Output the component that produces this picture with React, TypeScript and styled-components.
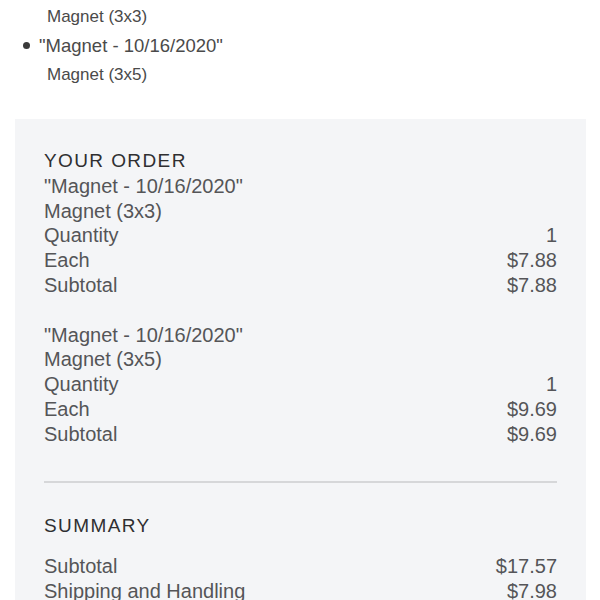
import React from 'react';
import styled, { createGlobalStyle } from 'styled-components';

const GlobalStyle = createGlobalStyle`
  body {
    margin: 0;
    background: #ffffff;
    font-family: "Liberation Sans", Arial, Helvetica, sans-serif;
  }
`;

const Page = styled.div`
  width: 600px;
  padding-top: 2px;
`;

const ItemList = styled.ul`
  list-style: none;
  margin: 0;
  padding: 0 0 0 22px;
  font-size: 18.5px;
  line-height: 29px;
  color: #4a4a4a;
`;

const ListItem = styled.li<{ $bullet?: boolean }>`
  position: relative;
  padding-left: 17px;

  &::before {
    content: '';
    display: ${(p) => (p.$bullet ? 'block' : 'none')};
    position: absolute;
    left: 1px;
    top: 11px;
    width: 7px;
    height: 7px;
    border-radius: 50%;
    background: #3a3a3a;
  }
`;

const ItemSub = styled.div`
  padding-left: 8px;
  font-size: 17px;
`;

const Panel = styled.section`
  margin: 30px 14px 0 15px;
  padding: 30px 29px 40px;
  background: #f4f5f7;
  color: #555558;
  font-size: 20px;
  line-height: 24.75px;
`;

const Heading = styled.h2`
  margin: 0;
  font-size: 19px;
  font-weight: 400;
  letter-spacing: 1.4px;
  line-height: 24.75px;
  color: #2f2f31;
`;

const OrderBlock = styled.div`
  & + & {
    margin-top: 25px;
  }
`;

const Row = styled.div`
  display: flex;
  justify-content: space-between;
`;

const Divider = styled.hr`
  margin: 35px 0 31px;
  border: none;
  height: 2px;
  background: #d6d7d9;
`;

const SummaryRows = styled.div`
  margin-top: 15px;
`;

type Order = { title: string; size: string; qty: number; each: string; subtotal: string };

const orders: Order[] = [
  { title: '"Magnet - 10/16/2020"', size: 'Magnet (3x3)', qty: 1, each: '$7.88', subtotal: '$7.88' },
  { title: '"Magnet - 10/16/2020"', size: 'Magnet (3x5)', qty: 1, each: '$9.69', subtotal: '$9.69' },
];

const App = () => {
  return (
    <Page>
      <GlobalStyle />
      <ItemList>
        <ListItem>
          <ItemSub>Magnet (3x3)</ItemSub>
        </ListItem>
        <ListItem $bullet>
          "Magnet - 10/16/2020"
          <ItemSub>Magnet (3x5)</ItemSub>
        </ListItem>
      </ItemList>

      <Panel>
        <Heading>YOUR ORDER</Heading>
        {orders.map((o, i) => (
          <OrderBlock key={i}>
            <div>{o.title}</div>
            <div>{o.size}</div>
            <Row>
              <span>Quantity</span>
              <span>{o.qty}</span>
            </Row>
            <Row>
              <span>Each</span>
              <span>{o.each}</span>
            </Row>
            <Row>
              <span>Subtotal</span>
              <span>{o.subtotal}</span>
            </Row>
          </OrderBlock>
        ))}

        <Divider />

        <Heading>SUMMARY</Heading>
        <SummaryRows>
          <Row>
            <span>Subtotal</span>
            <span>$17.57</span>
          </Row>
          <Row>
            <span>Shipping and Handling</span>
            <span>$7.98</span>
          </Row>
        </SummaryRows>
      </Panel>
    </Page>
  );
};

export default App;
